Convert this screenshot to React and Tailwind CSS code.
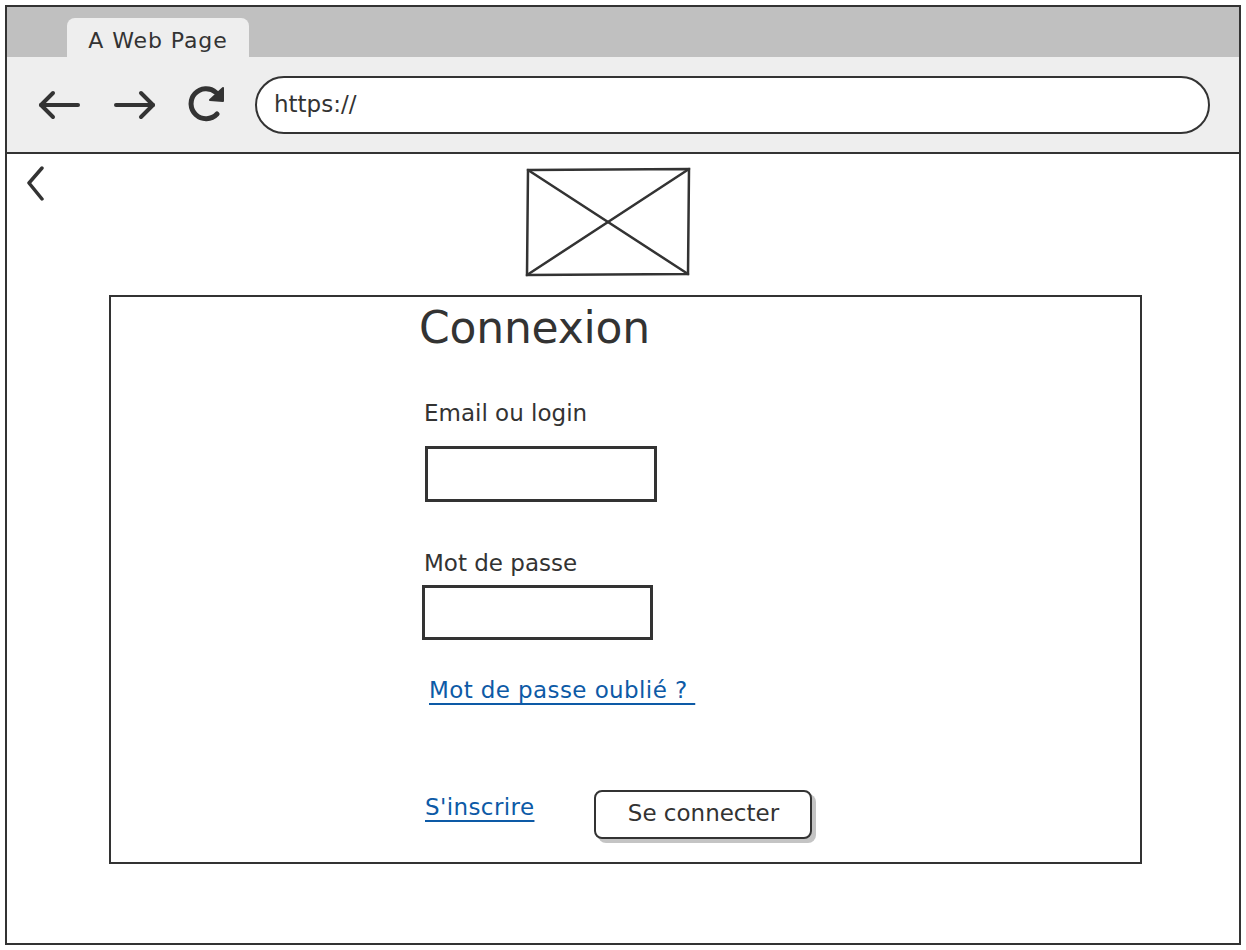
import React from "react";

const ink = "#333333";

const BackArrow = () => (
  <svg width="44" height="32" viewBox="0 0 44 32" fill="none" stroke={ink} strokeWidth="4" strokeLinecap="round" strokeLinejoin="round">
    <path d="M3 16 H40" />
    <path d="M15 4 L3 16 L15 28" />
  </svg>
);

const FwdArrow = () => (
  <svg width="44" height="32" viewBox="0 0 44 32" fill="none" stroke={ink} strokeWidth="4" strokeLinecap="round" strokeLinejoin="round">
    <path d="M3 16 H40" />
    <path d="M28 4 L40 16 L28 28" />
  </svg>
);

const Reload = () => (
  <svg width="40" height="38" viewBox="0 0 40 38" fill="none">
    <path d="M31 6.5 A15 15 0 1 0 32 28" stroke={ink} strokeWidth="5" strokeLinecap="round" />
    <path d="M25 14 L38 2 L38 15 Z" fill={ink} stroke={ink} strokeWidth="2" strokeLinejoin="round" />
  </svg>
);

const Chevron = () => (
  <svg width="24" height="36" viewBox="0 0 24 36" fill="none" stroke={ink} strokeWidth="3.5" strokeLinecap="round" strokeLinejoin="round">
    <path d="M17 2 L4 17 L17 33" />
  </svg>
);

const ImagePlaceholder = () => (
  <svg width="166" height="110" viewBox="0 0 166 110" fill="none" stroke={ink} strokeWidth="2.5" strokeLinecap="round">
    <path d="M3 3 L164 2 L163 107 L2 108 Z" />
    <path d="M3 3 L163 107" />
    <path d="M2 108 L164 2" />
  </svg>
);

export default function App() {
  return (
    <div className="w-[1246px] h-[950px] bg-white p-[5px]" style={{ fontFamily: '"DejaVu Sans", "Noto Sans", sans-serif' }}>
      <div className="w-full h-full border-[2.5px] border-[#333] flex flex-col text-[#333]">
        {/* tab strip */}
        <div className="h-[50px] bg-[#c0c0c0] flex items-end pl-[60px]">
          <div className="h-[39px] w-[182px] bg-[#eeeeee] rounded-t-lg flex justify-center text-[22px] leading-[28px] tracking-[0.9px] pt-[9px]">
            A Web Page
          </div>
        </div>
        {/* toolbar */}
        <div className="h-[97px] bg-[#eeeeee] border-b-2 border-[#333] flex items-center pl-[31px] pr-[29px]">
          <BackArrow />
          <div className="ml-[31px]"><FwdArrow /></div>
          <div className="ml-[28px]"><Reload /></div>
          <div className="ml-[30px] flex-1 h-[58px] bg-white border-2 border-[#333] rounded-full flex items-center px-[17px] text-[23px]">
            https://
          </div>
        </div>
        {/* content */}
        <div className="flex-1 flex flex-col">
          <div className="flex items-start pt-[12px] pl-[18px]">
            <Chevron />
            <div className="ml-[476px] mt-[1px]"><ImagePlaceholder /></div>
          </div>
          <div className="ml-[102px] mt-[18px] w-[1033px] h-[569px] border-[2.5px] border-[#333] flex flex-col pl-[308px]">
            <div className="text-[44px] leading-none mt-[9px] tracking-[-0.2px]">Connexion</div>
            <div className="text-[23px] leading-[28px] mt-[49px] ml-[5px]">Email ou login</div>
            <div className="mt-[19px] ml-[6px] w-[232px] h-[56px] border-[3px] border-[#333]"></div>
            <div className="text-[23px] leading-[28px] mt-[47px] ml-[5px]">Mot de passe</div>
            <div className="mt-[8px] ml-[3px] w-[231px] h-[55px] border-[3px] border-[#333]"></div>
            <a className="text-[23px] leading-[28px] mt-[36px] ml-[10px] tracking-[0.4px] text-[#0d5aa6] underline underline-offset-[5px] w-fit">
              Mot de passe oublié ?&nbsp;
            </a>
            <div className="flex items-start mt-[86px] ml-[6px]">
              <a className="text-[23px] leading-[28px] mt-[3px] tracking-[0.4px] text-[#0d5aa6] underline underline-offset-[5px]">S'inscrire</a>
              <button className="ml-[60px] w-[218px] h-[49px] pb-[3px] bg-white border-2 border-[#333] rounded-lg shadow-[4px_4px_0_#c4c4c4] text-[23px] leading-[28px]">
                Se connecter
              </button>
            </div>
          </div>
        </div>
      </div>
    </div>
  );
}
